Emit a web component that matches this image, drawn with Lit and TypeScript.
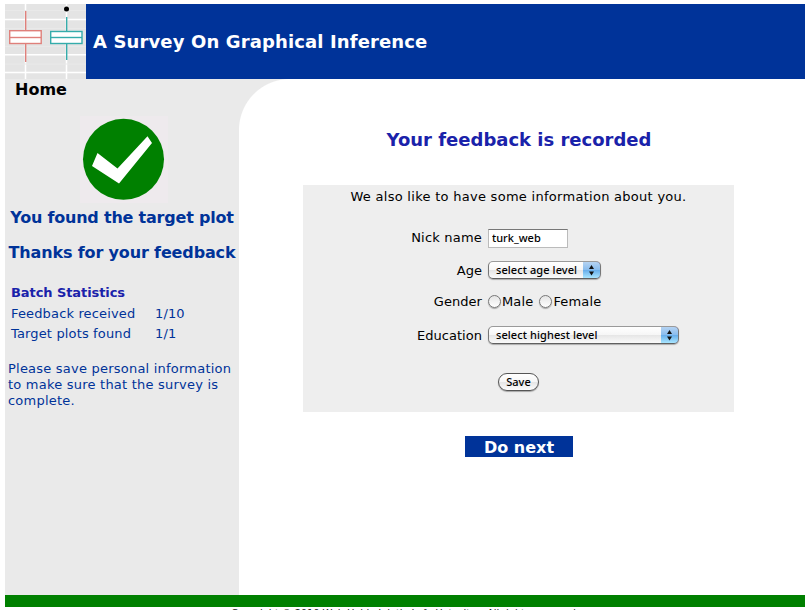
import { LitElement, html, css } from "lit";
import { customElement, property } from "lit/decorators.js";

@customElement("mac-select")
class MacSelect extends LitElement {
  @property() label = "";
  static styles = css`
    :host { display: block; height: 18px; }
    .box {
      box-sizing: border-box; height: 18px; display: flex; border: 1px solid #777;
      border-color: #9a9a9a #777 #606060 #777; border-radius: 5px; overflow: hidden;
      background: linear-gradient(#fff 0%, #f6f6f6 48%, #e6e6e6 52%, #fafafa 100%);
      box-shadow: 0 1px 1px rgba(0, 0, 0, 0.28);
    }
    .text {
      flex: 1; padding-left: 7px; font: 500 11px/16px "Noto Sans", sans-serif;
      letter-spacing: 0.08px; color: #000; white-space: nowrap;
    }
    .cap {
      width: 18px; margin: -1px -1px -1px 0; box-sizing: border-box; border: 1px solid #3a4f95;
      border-left: 0; border-top-color: #2c3a94; border-radius: 0 5px 5px 0;
      background: linear-gradient(#b5d3f2 0%, #8abdee 48%, #68aeea 52%, #a9e6ff 100%);
    }
    svg { display: block; margin: 3px 0 0 5px; }
  `;
  render() {
    return html`<div class="box">
      <span class="text">${this.label}</span>
      <span class="cap"><svg width="7" height="11" viewBox="0 0 7 11">
        <path d="M3.5 0L6 4H1ZM3.5 10.6L6 6.6H1Z" fill="#111" />
      </svg></span>
    </div>`;
  }
}

@customElement("app-root")
class AppRoot extends LitElement {
  static styles = css`
    :host {
      display: block; box-sizing: border-box; width: 809px; height: 610px; overflow: hidden;
      padding: 4px 4px 0 5px; background: #fff; color: #000;
      font: 13px/16px Verdana, "DejaVu Sans", sans-serif; white-space: nowrap;
    }
    header { height: 75px; background: #039; display: flex; align-items: center; }
    header svg { display: block; }
    h1 { margin: 0 0 0 7px; font-size: 18px; line-height: 24px; color: #fff; letter-spacing: 0.13px; }
    main { display: flex; height: 516px; }
    aside { width: 234px; background: #eaeaea; color: #039; }
    .home { padding: 1px 0 0 10px; color: #000; font-weight: bold; font-size: 16px; line-height: 20px; }
    .badge { display: block; margin: 16px 0 0 75px; }
    .msg { text-align: center; font-weight: bold; font-size: 16px; line-height: 20px; }
    .found { margin-top: 5px; letter-spacing: -0.21px; }
    .thanks { margin-top: 15px; letter-spacing: -0.15px; }
    .stats { margin: 19px 0 0 6px; display: grid; grid-template-columns: 144px auto; line-height: 20px; letter-spacing: 0.15px; }
    .stats b { grid-column: span 2; color: #1a22aa; line-height: 22px; letter-spacing: -0.08px; }
    .note { margin: 17px 0 0 3px; letter-spacing: 0.22px; }
    section { flex: 1; display: flex; flex-direction: column; align-items: center;
      background: radial-gradient(circle at 51px 51px, #fff 50.5px, #eaeaea 51.5px) 0 0 / 51px 51px no-repeat; }
    h2 { margin: 49px 0 0 -6px; font-size: 18px; line-height: 24px; color: #1a22aa; }
    form { box-sizing: border-box; width: 431px; height: 227px; margin: 33px 7px 0 0; background: #eee; }
    .intro { padding-top: 4px; text-align: center; letter-spacing: 0.28px; }
    .row { display: flex; align-items: center; height: 20px; letter-spacing: 0.15px; }
    .row > label { width: 179px; margin-right: 6px; text-align: right; letter-spacing: 0.04px; }
    .nick { margin-top: 23px; }
    .nick > label { letter-spacing: 0.2px; }
    .age { margin-top: 12px; }
    .gender { margin-top: 11px; }
    .edu { margin-top: 14px; }
    .age label, .edu label, .gender label, .gender span { padding-top: 1px; }
    input { box-sizing: border-box; width: 80px; height: 19px; margin: 0; padding: 0 3px 2px; border: 1px solid #bbb;
      border-top-color: #777; border-radius: 0; outline: 0; background: #fff; color: #000; font: 500 11px "Noto Sans", sans-serif; }
    .s1 { width: 113px; }
    .s2 { width: 191px; }
    .radio { box-sizing: border-box; width: 13px; height: 13px; border: 1px solid #777; border-radius: 50%;
      background: linear-gradient(#e4e4e4, #fff); box-shadow: 0 1px 1px rgba(0, 0, 0, 0.3); margin-right: 1px; }
    .male { margin-right: 6px; }
    .save { display: block; width: 41px; height: 18px; box-sizing: border-box; margin: 28px 0 0 195px; padding: 0;
      border: 1px solid #555; border-radius: 9px; font: 500 11px/14px "Noto Sans", sans-serif; color: #000;
      background: linear-gradient(#fff 0%, #f6f6f6 48%, #e6e6e6 52%, #fdfdfd 100%); box-shadow: 0 1px 1px rgba(0, 0, 0, 0.3); }
    .next { box-sizing: border-box; width: 108px; height: 21px; margin: 24px 7px 0 0; padding-left: 1px; background: #039;
      color: #fff; text-align: center; font-weight: bold; font-size: 16px; line-height: 23px; }
    .bar { height: 12px; background: green; }
    footer { font-size: 10px; line-height: 14px; text-align: center; color: #222; letter-spacing: -0.14px; }
  `;
  render() {
    return html`
      <header>
        <svg width="81" height="75" viewBox="0 0 81 75">
          <rect width="81" height="75" fill="#e4e4e4" />
          <path d="M0 15.5H81M0 50.8H81M0 68.5H81M20.5 0V75M61.5 0V75" stroke="#fff" stroke-width="1.5" />
          <path d="M0 6.5H81M0 24.5H81M0 42.5H81M0 60H81" stroke="#e9e9e9" />
          <g fill="#fff" stroke="#df807b" stroke-width="1.4">
            <path d="M20.7 7V58" /><rect x="4.7" y="26.7" width="31.5" height="12.8" /><path d="M5 33.5H36" />
          </g>
          <g fill="#fff" stroke="#35acab" stroke-width="1.4">
            <path d="M61.7 13V56" /><rect x="45.7" y="27.5" width="31.3" height="12" /><path d="M46 33.5H77" />
          </g>
          <circle cx="61.5" cy="5" r="2.5" />
        </svg>
        <h1>A Survey On Graphical Inference</h1>
      </header>
      <main>
        <aside>
          <div class="home">Home</div>
          <svg class="badge" width="88" height="87" viewBox="0 0 88 87">
            <rect width="88" height="87" fill="#eeeaed" />
            <circle cx="43.5" cy="43.3" r="40.5" fill="#008000" />
            <path d="M17.5 37L37.5 52.5L67.5 20.3L72 27L39 67.5L12 50Z" fill="#fff" />
          </svg>
          <div class="msg found">You found the target plot</div>
          <div class="msg thanks">Thanks for your feedback</div>
          <div class="stats">
            <b>Batch Statistics</b>
            <span>Feedback received</span><span>1/10</span>
            <span>Target plots found</span><span>1/1</span>
          </div>
          <div class="note">Please save personal information<br />to make sure that the survey is<br />complete.</div>
        </aside>
        <section>
          <h2>Your feedback is recorded</h2>
          <form>
            <div class="intro">We also like to have some information about you.</div>
            <div class="row nick"><label>Nick name</label><input value="turk_web" /></div>
            <div class="row age"><label>Age</label><mac-select class="s1" label="select age level"></mac-select></div>
            <div class="row gender"><label>Gender</label><i class="radio"></i><span class="male">Male</span><i class="radio"></i><span>Female</span></div>
            <div class="row edu"><label>Education</label><mac-select class="s2" label="select highest level"></mac-select></div>
            <button class="save" type="button">Save</button>
          </form>
          <div class="next">Do next</div>
        </section>
      </main>
      <div class="bar"></div>
      <footer>Copyright © 2010 Web Hable Iniatiu Lofe Hat, sites. All rights reserved.</footer>
    `;
  }
}
